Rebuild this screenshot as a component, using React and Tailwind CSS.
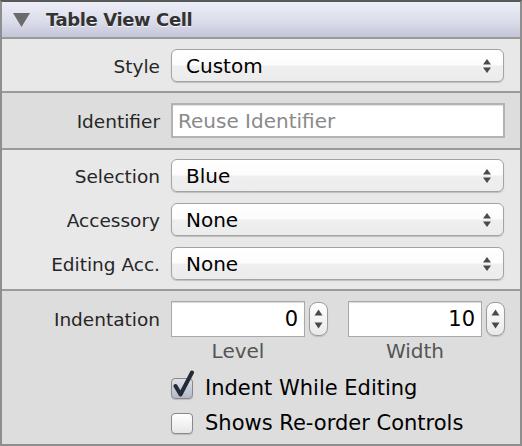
import React from "react";

const font = "font-['DejaVu_Sans',sans-serif]";

function Arrows() {
  return (
    <svg width="10" height="16" viewBox="0 0 10 16" className="shrink-0">
      <path d="M5 1 L9 6.5 L1 6.5 Z" fill="#4a4a4a" />
      <path d="M5 15 L9 9.5 L1 9.5 Z" fill="#4a4a4a" />
    </svg>
  );
}

function Select({ value }) {
  return (
    <div className="flex items-center justify-between h-[33px] w-[333px] rounded-[6px] border border-[#a3a3a3] bg-[linear-gradient(to_bottom,#ffffff_0%,#fcfcfc_48%,#efefef_52%,#ececec_100%)] shadow-[0_1px_1px_rgba(0,0,0,0.18)] pl-[14px] pr-[11px]">
      <span className="text-[20px] leading-none text-black">{value}</span>
      <Arrows />
    </div>
  );
}

function Row({ label, children, className = "" }) {
  return (
    <div className={"flex items-center " + className}>
      <div className="w-[158px] pt-[3px] text-right text-[18.5px] text-[#262626] leading-none">{label}</div>
      <div className="ml-[11px]">{children}</div>
    </div>
  );
}

function Stepper() {
  return (
    <div className="flex flex-col items-center justify-between w-[19px] h-[34px] rounded-[8px] border border-[#9c9c9c] bg-[linear-gradient(to_bottom,#ffffff,#e9e9e9)] shadow-[0_1px_1px_rgba(0,0,0,0.15)] py-[6px]">
      <svg width="9" height="7" viewBox="0 0 9 7">
        <path d="M4.5 0.5 L8.5 6.5 L0.5 6.5 Z" fill="#4a4a4a" />
      </svg>
      <svg width="9" height="7" viewBox="0 0 9 7">
        <path d="M4.5 6.5 L8.5 0.5 L0.5 0.5 Z" fill="#4a4a4a" />
      </svg>
    </div>
  );
}

function NumField({ value }) {
  return (
    <div className="flex items-center justify-end w-[134px] h-[36px] bg-white border border-[#a9a9a9] shadow-[inset_0_1px_1px_rgba(0,0,0,0.15)] pr-[6px]">
      <span className="text-[21px] leading-none text-black">{value}</span>
    </div>
  );
}

function Checkbox({ checked }) {
  return (
    <div className="relative w-[22px] h-[21px] shrink-0">
      <div
        className={
          "w-[22px] h-[21px] rounded-[4px] border border-[#8a8a8a] shadow-[0_1px_1px_rgba(0,0,0,0.15)] " +
          (checked
            ? "bg-[linear-gradient(to_bottom,#dfe2ea,#b3b8c6)]"
            : "bg-[linear-gradient(to_bottom,#ffffff,#e6e6e6)]")
        }
      />
      {checked && (
        <svg
          width="26"
          height="30"
          viewBox="0 0 26 30"
          className="absolute left-[0px] top-[-8px]"
        >
          <path
            d="M4.5 16 L9.5 24.5 L21 2.5"
            fill="none"
            stroke="#222b38"
            strokeWidth="4"
            strokeLinecap="round"
            strokeLinejoin="round"
          />
        </svg>
      )}
    </div>
  );
}

export default function App() {
  return (
    <div className={"w-[522px] h-[446px] flex flex-col border-t-2 border-t-[#595959] border-x-2 border-x-[#8e8e8e] border-b-2 border-b-[#8e8e8e] " + font}>
      {/* Header */}
      <div className="h-[35px] shrink-0 flex items-center bg-[linear-gradient(to_bottom,#eceef8,#d9dbe9_60%,#c4c6d9)]">
        <svg width="17" height="14" viewBox="0 0 17 14" className="ml-[11px]">
          <path d="M0 0 L17 0 L8.5 14 Z" fill="#6b6b6b" />
        </svg>
        <span className="ml-[16px] text-[18px] tracking-[-0.4px] font-bold text-[#333] leading-none [text-shadow:0_1px_0_rgba(255,255,255,0.85)]">
          Table View Cell
        </span>
      </div>
      <div className="h-[2px] shrink-0 bg-[#9a9a9a]" />

      {/* Section 1 */}
      <div className="h-[52px] shrink-0 bg-[#e8e8e8] pt-[10px]">
        <Row label="Style">
          <Select value="Custom" />
        </Row>
      </div>
      <div className="h-[2px] shrink-0 bg-[#9a9a9a]" />

      {/* Section 2 */}
      <div className="h-[55px] shrink-0 bg-[#dddddd] pt-[10px]">
        <Row label="Identifier">
          <div className="flex items-center w-[334px] h-[35px] bg-white border-2 border-[#b3b3b3] shadow-[inset_0_1px_1px_rgba(0,0,0,0.12)] pl-[5px]">
            <span className="text-[20px] leading-none text-[#8a8a8a]">Reuse Identifier</span>
          </div>
        </Row>
      </div>
      <div className="h-[2px] shrink-0 bg-[#9a9a9a]" />

      {/* Section 3 */}
      <div className="h-[139px] shrink-0 bg-[#e8e8e8] pt-[9px] flex flex-col gap-[11px]">
        <Row label="Selection">
          <Select value="Blue" />
        </Row>
        <Row label="Accessory">
          <Select value="None" />
        </Row>
        <Row label="Editing Acc.">
          <Select value="None" />
        </Row>
      </div>
      <div className="h-[2px] shrink-0 bg-[#9a9a9a]" />

      {/* Section 4 */}
      <div className="flex-1 bg-[#dddddd] pt-[10px] flex flex-col">
        <Row label="Indentation">
          <div className="flex items-center">
            <NumField value="0" />
            <div className="ml-[4px]">
              <Stepper />
            </div>
            <div className="ml-[20px]">
              <NumField value="10" />
            </div>
            <div className="ml-[4px]">
              <Stepper />
            </div>
          </div>
        </Row>
        <div className="flex ml-[169px] mt-[2px]">
          <div className="w-[134px] text-center text-[20px] text-[#555] leading-[24px]">Level</div>
          <div className="w-[134px] ml-[43px] text-center text-[20px] text-[#555] leading-[24px]">Width</div>
        </div>
        <div className="flex items-center ml-[169px] mt-[15px]">
          <Checkbox checked />
          <span className="ml-[12px] text-[21px] leading-none text-black">Indent While Editing</span>
        </div>
        <div className="flex items-center ml-[169px] mt-[14px]">
          <Checkbox />
          <span className="ml-[12px] text-[21px] leading-none text-black">Shows Re-order Controls</span>
        </div>
      </div>
    </div>
  );
}
